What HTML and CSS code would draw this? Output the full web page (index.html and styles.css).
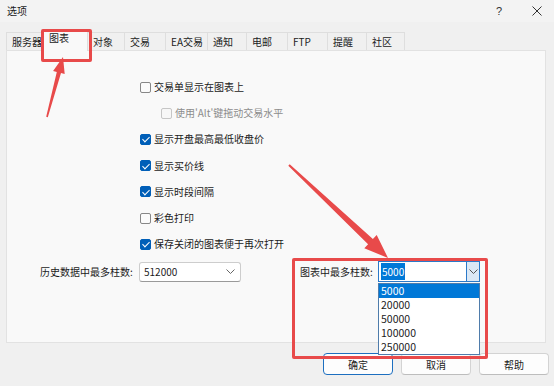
FILE: index.html
```html
<!DOCTYPE html>
<html lang="zh-CN">
  <head>
    <meta charset="UTF-8" />
    <title>选项</title>
    <link rel="stylesheet" href="styles.css">
  </head>
  <body>
    <div class="window">
      <div class="titlebar">
        <span class="title">选项</span>
        <span class="help">?</span>
        <svg class="close" width="10" height="10" viewBox="0 0 10 10">
          <path d="M0.5 0.5 L9.5 9.5 M9.5 0.5 L0.5 9.5" stroke="#333" stroke-width="1" fill="none" />
        </svg>
      </div>

      <div class="tabs">
        <div class="tab w36">服务器</div>
        <div class="tab active w46">图表</div>
        <div class="tab w37">对象</div>
        <div class="tab w41">交易</div>
        <div class="tab w42">EA交易</div>
        <div class="tab w39">通知</div>
        <div class="tab w41">电邮</div>
        <div class="tab w40">FTP</div>
        <div class="tab w39">提醒</div>
        <div class="tab w38">社区</div>
      </div>

      <div class="panel">
        <div class="checks">
          <label class="check-row"><span class="box"></span>交易单显示在图表上</label>
          <label class="check-row sub disabled"><span class="box"></span>使用'Alt'键拖动交易水平</label>
          <label class="check-row"><span class="box on"></span>显示开盘最高最低收盘价</label>
          <label class="check-row"><span class="box on"></span>显示买价线</label>
          <label class="check-row"><span class="box on"></span>显示时段间隔</label>
          <label class="check-row"><span class="box"></span>彩色打印</label>
          <label class="check-row"><span class="box on"></span>保存关闭的图表便于再次打开</label>
        </div>

        <div class="limits">
          <div class="field left">
            <span class="field-label">历史数据中最多柱数:</span>
            <div class="combo">
              <span class="combo-value">512000</span>
              <svg class="chev" width="9" height="5" viewBox="0 0 9 5">
                <path d="M0.5 0.5 L4.5 4.5 L8.5 0.5" stroke="#666" stroke-width="1" fill="none" />
              </svg>
            </div>
          </div>

          <div class="field right">
            <span class="field-label">图表中最多柱数:</span>
            <div class="combo focused">
              <span class="combo-value"><span class="sel">5000</span></span>
              <span class="drop-btn">
                <svg width="9" height="5" viewBox="0 0 9 5">
                  <path d="M0.5 0.5 L4.5 4.5 L8.5 0.5" stroke="#555" stroke-width="1" fill="none" />
                </svg>
              </span>
            </div>
            <ul class="dropdown">
              <li class="hl">5000</li>
              <li>20000</li>
              <li>50000</li>
              <li>100000</li>
              <li>250000</li>
            </ul>
          </div>
        </div>
      </div>

      <div class="buttons">
        <button class="btn default">确定</button>
        <button class="btn">取消</button>
        <button class="btn">帮助</button>
      </div>

      <!-- annotation marks drawn over the dialog -->
      <div class="mark mark-tab"></div>
      <div class="mark mark-combo"></div>
      <svg class="arrows" width="554" height="386" viewBox="0 0 554 386">
        <polygon fill="#e84a4a" points="46.2,116.8 56.8,71.9 53.1,71 63,57 64.7,74 61,73.1 47.8,117.2" />
        <polygon fill="#e84a4a" points="288.3,165.7 368.1,244.2 364.3,248.2 388,258 376.7,235 372.9,239 289.7,164.3" />
      </svg>
    </div>
  </body>
</html>
```

FILE: styles.css
```css
* {
  margin: 0;
  padding: 0;
  box-sizing: border-box;
}

body {
  font-family: "Noto Sans CJK SC", "Noto Sans", sans-serif;
  font-size: 10px;
  color: #1b1b1b;
  background: #f0f0f0;
}

.window {
  position: relative;
  width: 554px;
  height: 386px;
  overflow: hidden;
  background: #f0f0f0;
}

/* title bar */
.titlebar {
  display: flex;
  align-items: center;
  height: 22px;
  padding-left: 7px;
  background: #f3f3f3;
}

.title {
  font-size: 10px;
  line-height: 14px;
}

.help {
  margin-left: auto;
  width: 10px;
  text-align: center;
  font-family: "Liberation Sans", sans-serif;
  font-size: 11px;
  color: #333;
}

.close {
  margin-left: 28px;
  margin-right: 12px;
}

/* tabs */
.tabs {
  display: flex;
  height: 18px;
  margin-top: 10px;
  padding-left: 6px;
}

.tab {
  height: 18px;
  padding-left: 5px;
  line-height: 18px;
  border: 1px solid #dedede;
  border-bottom: none;
  border-left: none;
  background: #f0f0f0;
  color: #222;
  white-space: nowrap;
}

.tab:first-child {
  border-left: 1px solid #dedede;
}

.tab.active {
  position: relative;
  z-index: 1;
  height: 22px;
  margin-top: -3px;
  margin-bottom: -1px;
  padding-left: 6px;
  line-height: 16px;
  background: #f9f9f9;
  border-left: 1px solid #dedede;
}

.w36 { width: 36px; }
.w37 { width: 37px; }
.w38 { width: 38px; }
.w39 { width: 39px; }
.w40 { width: 40px; }
.w41 { width: 41px; }
.w42 { width: 42px; }
.w46 { width: 46px; }

/* panel */
.panel {
  height: 293px;
  margin: 0 8px 0 6px;
  background: #f9f9f9;
  border: 1px solid #e2e2e2;
}

.checks {
  padding-top: 23px;
  padding-left: 133px;
}

.check-row {
  display: flex;
  align-items: center;
  height: 26.2px;
  line-height: 14px;
}

.check-row.sub {
  padding-left: 21px;
}

.check-row.disabled {
  color: #8c8c8c;
}

.box {
  position: relative;
  width: 11px;
  height: 11px;
  margin-right: 3px;
  border: 1px solid #878787;
  border-radius: 2px;
  background: #fbfbfb;
}

.disabled .box {
  border-color: #c6c6c6;
  background: #f7f7f7;
}

.box.on {
  border-color: #005fb8;
  background: #005fb8;
}

.box.on::after {
  content: "";
  position: absolute;
  left: 3px;
  top: 0.5px;
  width: 3px;
  height: 6px;
  border-right: 1.3px solid #fff;
  border-bottom: 1.3px solid #fff;
  transform: rotate(45deg);
}

/* max bars fields */
.limits {
  display: flex;
  margin-top: 4px;
  padding-left: 33px;
}

.field {
  position: relative;
  display: flex;
  align-items: center;
}

.field.left .field-label {
  width: 92px;
  margin-right: 7px;
}

.field.right {
  margin-left: 59px;
}

.field.right .field-label {
  width: 73px;
  margin-right: 5px;
}

.field-label {
  line-height: 14px;
  white-space: nowrap;
}

.combo {
  display: flex;
  align-items: center;
  width: 102px;
  height: 20px;
  padding-left: 4px;
  padding-right: 5px;
  background: #fff;
  border: 1px solid #cdcdcd;
  border-bottom-color: #9a9a9a;
  border-radius: 3px;
}

.combo-value {
  flex: 1;
  line-height: 14px;
}

.combo.focused {
  height: 21px;
  padding-left: 2px;
  padding-right: 0;
  border: 1px solid #2b79c9;
  border-radius: 0;
}

.sel {
  padding: 1px 1px;
  background: #0078d7;
  color: #fff;
}

.drop-btn {
  display: flex;
  align-items: center;
  justify-content: center;
  width: 13px;
  height: 19px;
  background: #dbe8f5;
  border-left: 1px solid #2b79c9;
}

.dropdown {
  position: absolute;
  left: 78px;
  top: 22px;
  z-index: 2;
  width: 102px;
  list-style: none;
  background: #fff;
  border: 1px solid #4f7cab;
}

.dropdown li {
  height: 14px;
  padding-left: 2px;
  line-height: 14px;
  font-size: 10.5px;
}

.dropdown li.hl {
  background: #0078d7;
  color: #fff;
}

/* dialog buttons */
.buttons {
  display: flex;
  justify-content: flex-end;
  gap: 8px;
  margin-top: 10px;
  padding-right: 5px;
}

.btn {
  width: 70px;
  height: 22px;
  font-family: inherit;
  font-size: 10px;
  color: #1b1b1b;
  background: #fdfdfd;
  border: 1px solid #d3d3d3;
  border-bottom-color: #bdbdbd;
  border-radius: 4px;
}

.btn.default {
  border: 1px solid #1d6fc0;
}

/* red annotation */
.mark {
  position: absolute;
  z-index: 5;
  border: 3px solid #e84a4a;
  border-radius: 2px;
}

.mark-tab {
  left: 41px;
  top: 29px;
  width: 51px;
  height: 33px;
}

.mark-combo {
  left: 292px;
  top: 258px;
  width: 196px;
  height: 101px;
}

.arrows {
  position: absolute;
  left: 0;
  top: 0;
  z-index: 6;
}
```
